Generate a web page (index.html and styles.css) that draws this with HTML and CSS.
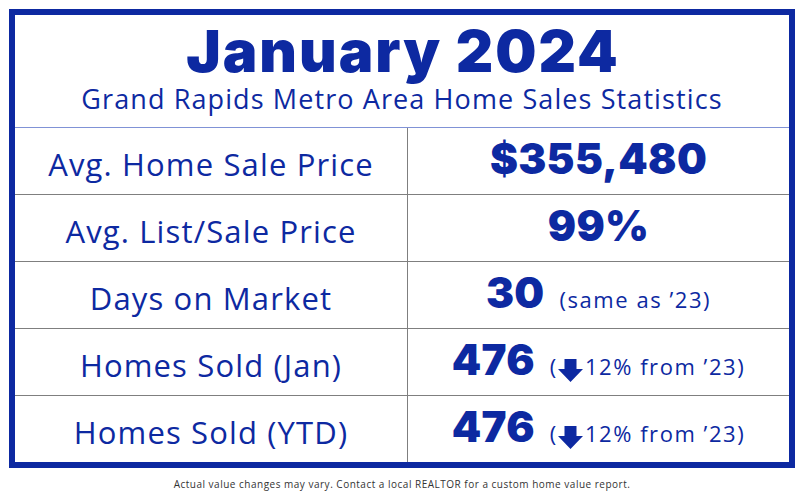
FILE: index.html
```html
<!DOCTYPE html>
<html lang="en">
<head>
<meta charset="utf-8">
<title>January 2024 Home Sales Statistics</title>
<link rel="stylesheet" href="styles.css">
</head>
<body>
<div class="frame">
  <header class="head">
    <h1 class="title">January 2024</h1>
    <p class="subtitle">Grand Rapids Metro Area Home Sales Statistics</p>
  </header>
  <div class="row">
    <div class="label">Avg. Home Sale Price</div>
    <div class="value"><span class="line"><span class="num">$355,480</span></span></div>
  </div>
  <div class="row">
    <div class="label">Avg. List/Sale Price</div>
    <div class="value"><span class="line"><span class="num">99%</span></span></div>
  </div>
  <div class="row">
    <div class="label">Days on Market</div>
    <div class="value"><span class="line"><span class="num">30</span><span class="note">(same as ’23)</span></span></div>
  </div>
  <div class="row">
    <div class="label">Homes Sold (Jan)</div>
    <div class="value"><span class="line"><span class="num">476</span><span class="note">(<svg class="arrow" viewBox="0 0 25 23" width="25" height="23"><path d="M6.5 0H18.5V10H25L12.5 23L0 10H6.5Z" fill="currentColor"/></svg>12% from ’23)</span></span></div>
  </div>
  <div class="row last">
    <div class="label">Homes Sold (YTD)</div>
    <div class="value"><span class="line"><span class="num">476</span><span class="note">(<svg class="arrow" viewBox="0 0 25 23" width="25" height="23"><path d="M6.5 0H18.5V10H25L12.5 23L0 10H6.5Z" fill="currentColor"/></svg>12% from ’23)</span></span></div>
  </div>
</div>
<p class="footer">Actual value changes may vary. Contact a local REALTOR for a custom home value report.</p>
</body>
</html>
```
FILE: styles.css
```css
html, body {
  margin: 0;
  padding: 0;
  background: #ffffff;
}
body {
  width: 804px;
  height: 501px;
  font-family: "Open Sans", "DejaVu Sans", sans-serif;
  color: #0d29a1;
  padding-top: 9px;
  box-sizing: border-box;
}
.frame {
  margin-left: 9px;
  width: 786px;
  height: 459px;
  box-sizing: border-box;
  border: 6px solid #0d29a1;
  display: flex;
  flex-direction: column;
}
.head {
  height: 113px;
  flex: none;
  box-sizing: border-box;
  border-bottom: 1px solid #8092d6;
  display: flex;
  flex-direction: column;
  align-items: center;
}
.title {
  margin: 3px 0 0 2px;
  font-family: "Inter", "DejaVu Sans", sans-serif;
  font-size: 58px;
  line-height: 66px;
  font-weight: 900;
  letter-spacing: 2px;
}
.subtitle {
  margin: 1px 0 0;
  font-size: 27px;
  line-height: 27px;
  font-weight: 400;
  letter-spacing: 1.1px;
}
.row {
  height: 67px;
  flex: none;
  box-sizing: border-box;
  border-bottom: 1px solid #7f7f7f;
  display: grid;
  grid-template-columns: 393px 1fr;
}
.row.last {
  border-bottom: none;
  height: 66px;
}
.label {
  border-right: 1px solid #7f7f7f;
  display: flex;
  align-items: center;
  justify-content: center;
  font-size: 31px;
  font-weight: 400;
  letter-spacing: 1.15px;
  padding-top: 6px;
}
.value {
  display: flex;
  align-items: center;
  justify-content: center;
  padding-bottom: 5px;
}
.line {
  display: flex;
  align-items: baseline;
}
.num {
  font-family: "Inter", "DejaVu Sans", sans-serif;
  font-size: 42px;
  font-weight: 900;
  letter-spacing: 0.3px;
}
.note {
  font-size: 22px;
  margin-left: 15px;
  letter-spacing: 1.55px;
}
.arrow {
  display: inline-block;
  vertical-align: -7px;
  margin: 0 2px 0 0;
}
.footer {
  margin: 9px 0 0;
  text-align: center;
  font-size: 10px;
  line-height: 14px;
  letter-spacing: 0.5px;
  color: #333333;
}
```
